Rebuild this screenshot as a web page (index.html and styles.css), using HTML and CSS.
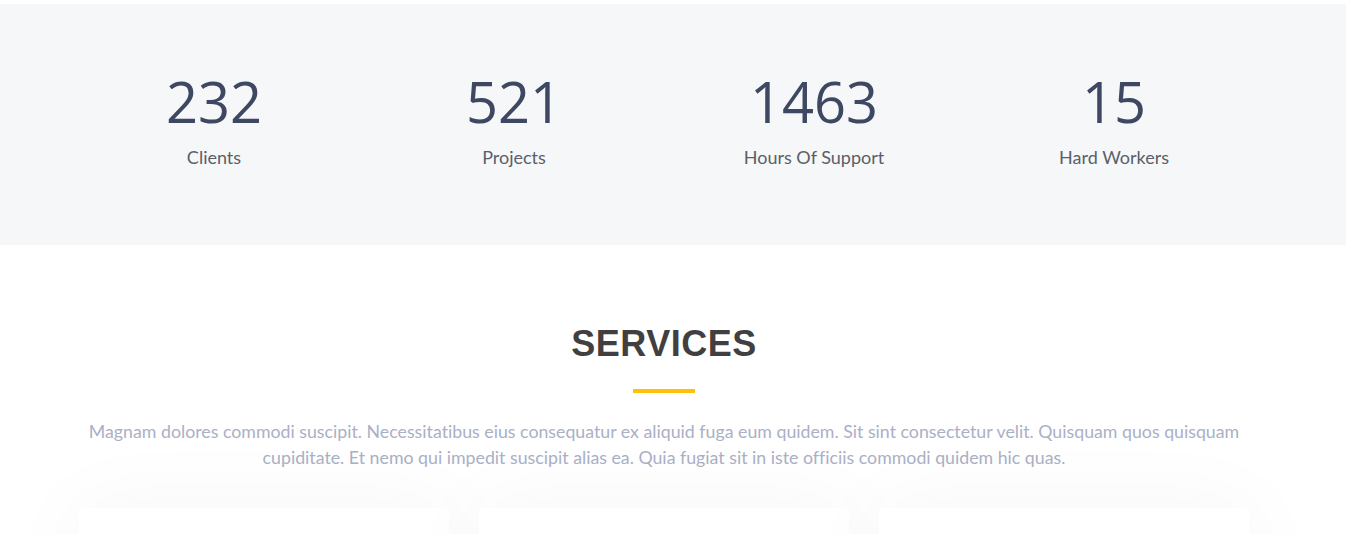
FILE: index.html
```html
<!DOCTYPE html>
<html lang="en">
<head>
<meta charset="utf-8">
<title>Counts &amp; Services</title>
<link rel="stylesheet" href="styles.css">
</head>
<body>
<main class="page">
  <section class="counts">
    <div class="container counts-row">
      <div class="count-item">
        <span class="count-num">232</span>
        <p class="count-label">Clients</p>
      </div>
      <div class="count-item">
        <span class="count-num">521</span>
        <p class="count-label">Projects</p>
      </div>
      <div class="count-item">
        <span class="count-num">1463</span>
        <p class="count-label">Hours Of Support</p>
      </div>
      <div class="count-item">
        <span class="count-num">15</span>
        <p class="count-label">Hard Workers</p>
      </div>
    </div>
  </section>

  <section class="services">
    <div class="container">
      <header class="section-title">
        <h2>SERVICES</h2>
        <span class="title-bar"></span>
        <p>Magnam dolores commodi suscipit. Necessitatibus eius consequatur ex aliquid fuga eum quidem. Sit sint consectetur velit. Quisquam quos quisquam cupiditate. Et nemo qui impedit suscipit alias ea. Quia fugiat sit in iste officiis commodi quidem hic quas.</p>
      </header>
      <div class="cards">
        <div class="card-col"><div class="card"></div></div>
        <div class="card-col"><div class="card"></div></div>
        <div class="card-col"><div class="card"></div></div>
      </div>
    </div>
  </section>
</main>
</body>
</html>
```

FILE: styles.css
```css
* { box-sizing: border-box; }

html, body {
  margin: 0;
  padding: 0;
  background: #ffffff;
}

body {
  font-family: "Open Sans", "Liberation Sans", sans-serif;
  color: #444;
  overflow: hidden;
}

.page {
  padding-top: 4px;
}

.container {
  width: 1200px;
  margin: 0 auto;
  position: relative;
  left: -9px;
}

/* ---------- counts ---------- */
.counts {
  background: #f6f7f9;
  height: 241px;
  padding-top: 69px;
}

.counts-row {
  display: grid;
  grid-template-columns: repeat(4, 1fr);
}

.count-item {
  display: flex;
  flex-direction: column;
  align-items: center;
}

.count-num {
  font-family: "Open Sans", sans-serif;
  font-weight: 400;
  font-size: 56px;
  line-height: 1;
  color: #3e4863;
}

.count-label {
  margin: 15px 0 0;
  font-family: "Lato", "Open Sans", sans-serif;
  font-weight: 400;
  font-size: 18px;
  line-height: 27px;
  color: #5a5f69;
}

/* ---------- services ---------- */
.services {
  padding-top: 81px;
}

.section-title {
  display: flex;
  flex-direction: column;
  align-items: center;
  padding: 0 15px;
}

.section-title h2 {
  margin: 0;
  font-family: "Liberation Sans", Arial, sans-serif;
  font-weight: 700;
  font-size: 36px;
  line-height: 36px;
  color: #413f3f;
  letter-spacing: 0.5px;
}

.title-bar {
  display: block;
  width: 62px;
  height: 4px;
  margin-top: 27px;
  background: #ffc107;
}

.section-title p {
  margin: 25px 0 0;
  font-family: "Lato", "Open Sans", sans-serif;
  font-size: 17.75px;
  line-height: 26px;
  color: #aab0c6;
  text-align: center;
  font-variant-ligatures: none;
}

.cards {
  display: grid;
  grid-template-columns: repeat(3, 1fr);
  margin-top: 38px;
}

.card-col {
  padding: 0 15px;
}

.card {
  height: 260px;
  background: #ffffff;
  box-shadow: 0 0 90px rgba(40, 58, 100, 0.04);
}
```
